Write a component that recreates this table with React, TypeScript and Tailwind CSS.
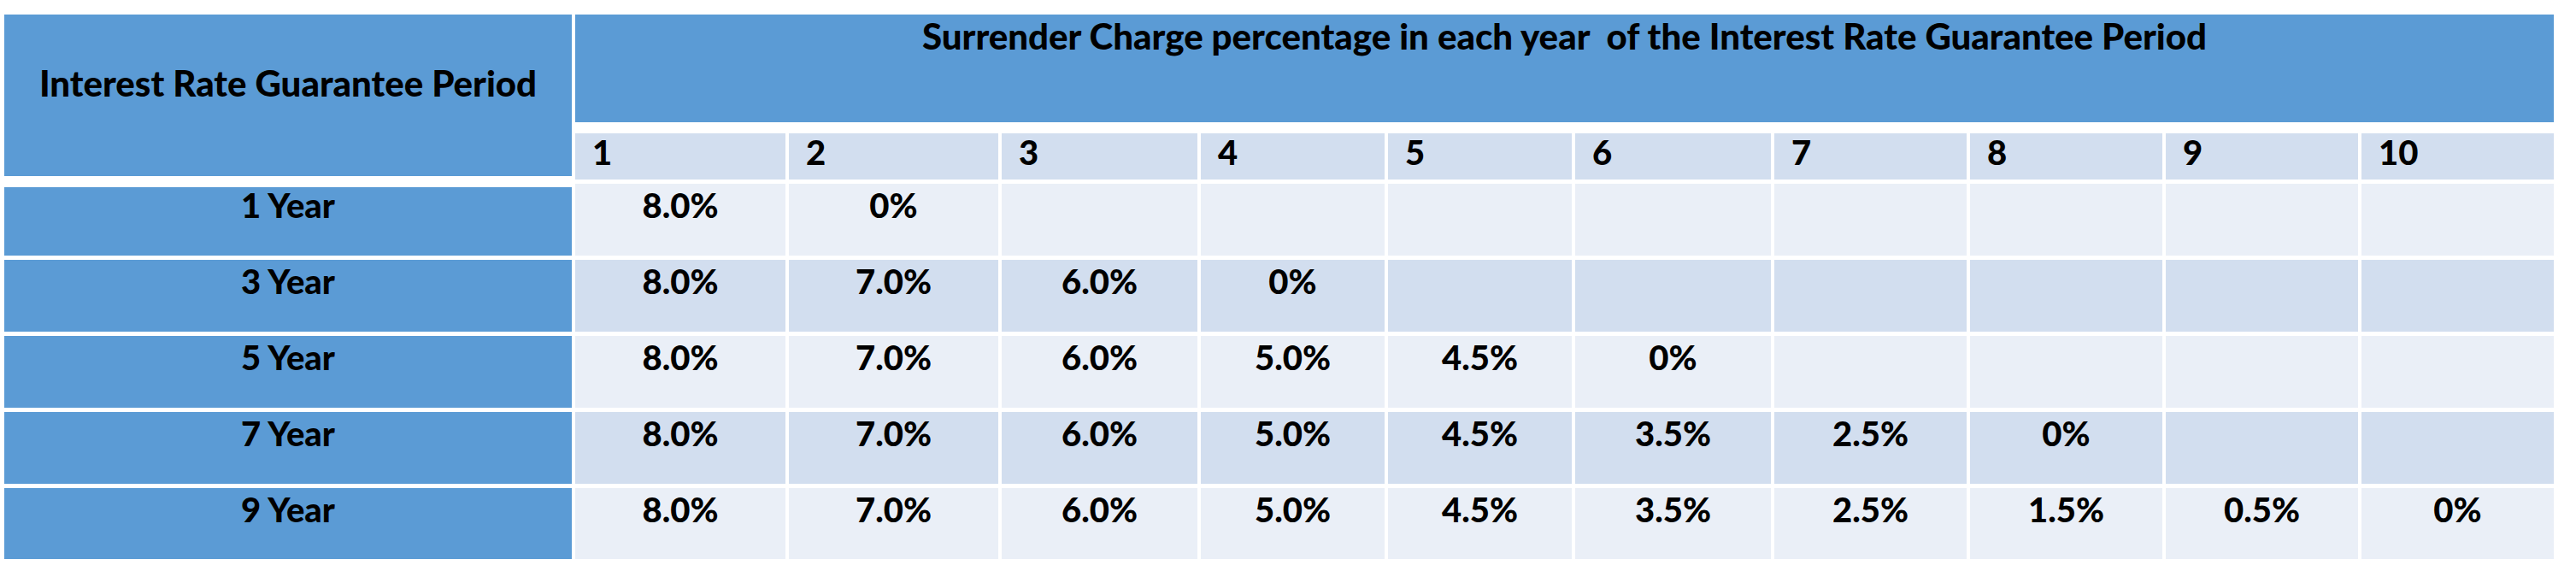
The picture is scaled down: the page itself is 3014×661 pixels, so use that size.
const years = ["1", "2", "3", "4", "5", "6", "7", "8", "9", "10"];

const rows = [
  { label: "1 Year", values: ["8.0%", "0%"], dark: false },
  { label: "3 Year", values: ["8.0%", "7.0%", "6.0%", "0%"], dark: true },
  { label: "5 Year", values: ["8.0%", "7.0%", "6.0%", "5.0%", "4.5%", "0%"], dark: false },
  { label: "7 Year", values: ["8.0%", "7.0%", "6.0%", "5.0%", "4.5%", "3.5%", "2.5%", "0%"], dark: true },
  {
    label: "9 Year",
    values: ["8.0%", "7.0%", "6.0%", "5.0%", "4.5%", "3.5%", "2.5%", "1.5%", "0.5%", "0%"],
    dark: false,
  },
];

export default function App() {
  return (
    <div className="min-h-[661px] w-[3014px] bg-white pt-[17px] pl-[5px] font-['Lato','Liberation_Sans',sans-serif] font-black text-black">
      <div className="grid grid-cols-[664px_246px_245px_229px_215px_215px_229px_225px_225px_225px_225px] grid-rows-[126px_3px_54px_84px_84px_84px_84px_83px] gap-x-[4px] gap-y-[5px]">
        <div className="col-start-1 row-start-1 row-span-3 mb-[4px] bg-[#5b9bd5] pt-[59px] text-center text-[42px] leading-none">
          Interest Rate Guarantee Period
        </div>
        <div className="col-start-2 col-span-10 row-start-1 bg-[#5b9bd5] pt-[4px] text-center text-[42px] leading-none whitespace-pre">
          {"Surrender Charge percentage in each year  of the Interest Rate Guarantee Period"}
        </div>

        {years.map((y) => (
          <div key={y} className="row-start-3 bg-[#d2deef] pl-[20px] pt-[2px] text-[40px] leading-none">
            {y}
          </div>
        ))}

        {rows.map((row, i) => {
          const bg = row.dark ? "bg-[#d2deef]" : "bg-[#eaeff7]";
          return (
            <div key={row.label} className="contents">
              <div
                className={`col-start-1 bg-[#5b9bd5] text-center text-[40px] leading-none ${
                  i === 0 ? "mt-[4px] pt-[1px]" : "pt-[5px]"
                }`}
              >
                {row.label}
              </div>
              {years.map((_, j) => (
                <div key={j} className={`${bg} pt-[5px] text-center text-[40px] leading-none`}>
                  {row.values[j] ?? ""}
                </div>
              ))}
            </div>
          );
        })}
      </div>
    </div>
  );
}
